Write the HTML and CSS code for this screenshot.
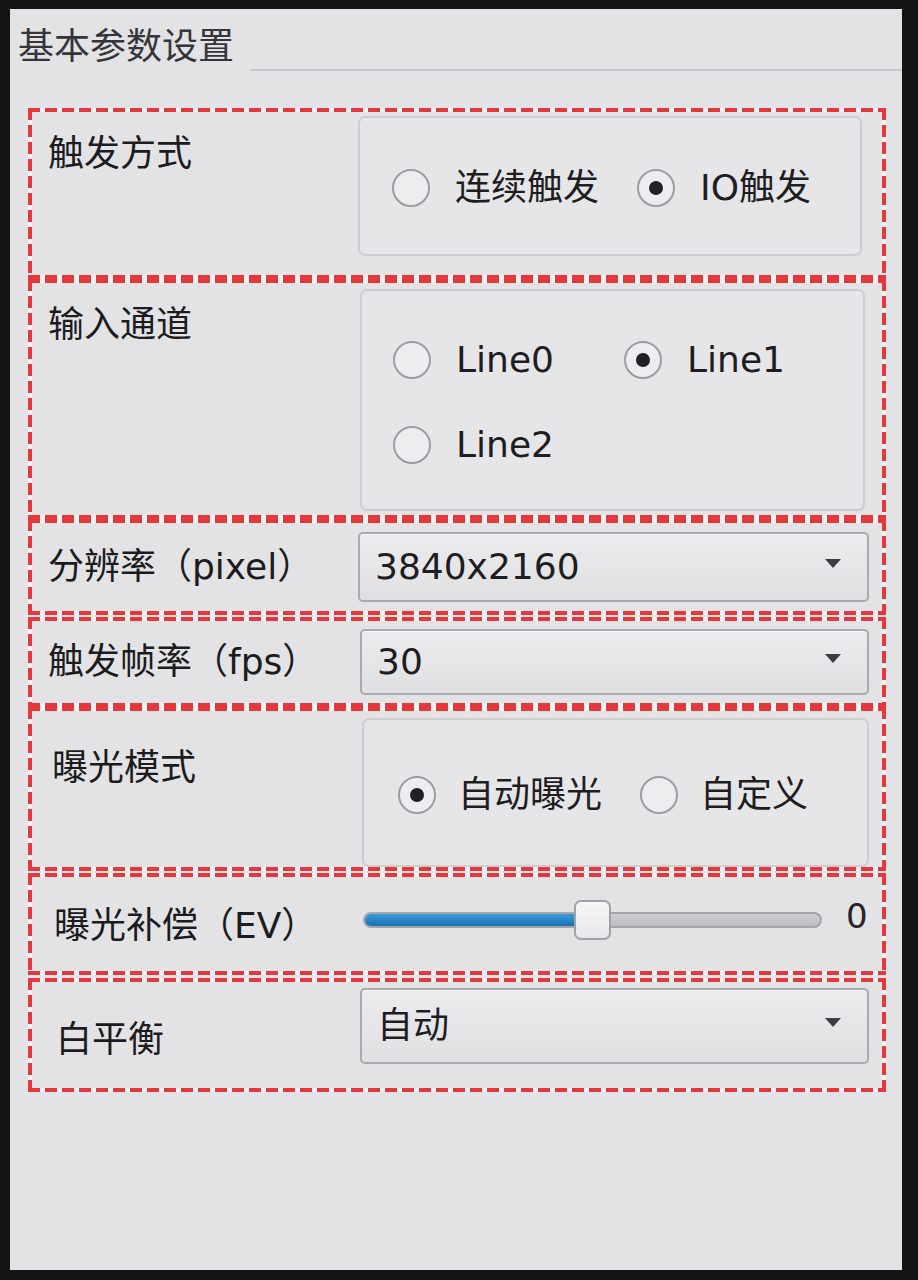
FILE: index.html
```html
<!DOCTYPE html>
<html lang="zh-CN">
<head>
<meta charset="utf-8">
<title>基本参数设置</title>
<link rel="stylesheet" href="styles.css">
</head>
<body>
<div class="screen">
  <div class="tabbar">
    <div class="tab">基本参数设置</div>
    <div class="tab-fill"></div>
  </div>
  <div class="form">
    <div class="field field-trigger">
      <div class="label label-top">触发方式</div>
      <div class="group group-trigger">
        <div class="option"><span class="radio"></span><span>连续触发</span></div>
        <div class="option"><span class="radio is-checked"></span><span>IO触发</span></div>
      </div>
    </div>

    <div class="field field-input">
      <div class="label label-top">输入通道</div>
      <div class="group group-input">
        <div class="option"><span class="radio"></span><span>Line0</span></div>
        <div class="option"><span class="radio is-checked"></span><span>Line1</span></div>
        <div class="option"><span class="radio"></span><span>Line2</span></div>
      </div>
    </div>

    <div class="field field-res">
      <div class="label">分辨率（pixel）</div>
      <div class="combo combo-res"><span class="combo-text">3840x2160</span><span class="arrow"></span></div>
    </div>

    <div class="field field-fps">
      <div class="label">触发帧率（fps）</div>
      <div class="combo combo-fps"><span class="combo-text">30</span><span class="arrow"></span></div>
    </div>

    <div class="field field-exp">
      <div class="label label-exp">曝光模式</div>
      <div class="group group-exp">
        <div class="option"><span class="radio is-checked"></span><span>自动曝光</span></div>
        <div class="option"><span class="radio"></span><span>自定义</span></div>
      </div>
    </div>

    <div class="field field-ev">
      <div class="label label-ev">曝光补偿（EV）</div>
      <div class="slider">
        <div class="track">
          <div class="fill" style="width: 47%"></div>
          <div class="handle" style="left: 46%"></div>
        </div>
        <div class="value">0</div>
      </div>
    </div>

    <div class="field field-wb">
      <div class="label label-wb">白平衡</div>
      <div class="combo combo-wb"><span class="combo-text">自动</span><span class="arrow"></span></div>
    </div>
  </div>
</div>
</body>
</html>
```

FILE: styles.css
```css
* { box-sizing: border-box; }

html, body {
  margin: 0;
  height: 100%;
}

body {
  background: #141414;
  padding: 9px 16px 0 10px;
  font-family: "DejaVu Sans", "Noto Sans CJK SC", sans-serif;
  font-size: 36px;
  line-height: 40px;
  color: #1d1d22;
}

.screen {
  width: 892px;
  height: 1261px;
  background: #e3e3e6;
  display: flex;
  flex-direction: column;
  overflow: hidden;
}

/* tab header */
.tabbar {
  display: flex;
  height: 62px;
  flex: none;
}

.tab {
  width: 240px;
  padding: 18px 0 0 8px;
  color: #35353a;
  white-space: nowrap;
}

.tab-fill {
  flex: 1;
  border-bottom: 2px solid #c6c6ca;
}

/* form rows with red dashed outlines */
.form {
  display: flex;
  flex-direction: column;
  margin: 37px 0 0 18px;
  width: 858px;
}

.field {
  --dash: #e4393c;
  --gap: rgba(255, 255, 255, 0.55);
  display: grid;
  grid-template-columns: 310px 1fr;
  padding: 4px 17px 4px 20px;
  background:
    repeating-linear-gradient(90deg, var(--dash) 0 12px, var(--gap) 12px 17px) left top / 100% 4px no-repeat,
    repeating-linear-gradient(90deg, var(--dash) 0 12px, var(--gap) 12px 17px) left bottom / 100% 4px no-repeat,
    repeating-linear-gradient(180deg, var(--dash) 0 12px, var(--gap) 12px 17px) left top / 4px 100% no-repeat,
    repeating-linear-gradient(180deg, var(--dash) 0 12px, var(--gap) 12px 17px) right top / 4px 100% no-repeat;
  align-items: center;
}

.field-trigger { height: 171px; align-items: start; }
.field-input   { height: 240px; align-items: start; }
.field-res     { height: 96px; }
.field-fps     { height: 90px; margin-top: 2px; }
.field-exp     { height: 164px; align-items: start; }
.field-ev      { height: 102px; margin-top: 2px; }
.field-wb      { height: 114px; margin-top: 3px; align-items: start; }

.label {
  white-space: nowrap;
  color: #1b1b20;
}

.label-top { padding-top: 22px; }
.label-exp { padding-top: 37px; padding-left: 4px; }
.label-ev  { padding-top: 4px; padding-left: 6px; }
.label-wb  { padding-top: 38px; padding-left: 8px; }

/* radio groups */
.group {
  border: 2px solid #cdcdd1;
  border-radius: 7px;
  background: #e6e6e9;
}

.group-trigger {
  margin-top: 4px;
  width: 504px;
  height: 140px;
  display: flex;
  align-items: center;
  gap: 38px;
  padding: 4px 0 0 32px;
}

.group-input {
  margin-top: 6px;
  width: 505px;
  height: 222px;
  display: grid;
  grid-template-columns: 231px 231px;
  grid-auto-rows: 40px;
  row-gap: 45px;
  padding: 49px 0 0 31px;
  margin-left: 2px;
}

.group-exp {
  margin-top: 7px;
  height: 149px;
  display: flex;
  align-items: center;
  gap: 38px;
  padding: 4px 0 0 34px;
  margin-left: 4px;
}

.option {
  display: flex;
  align-items: center;
  gap: 25px;
  white-space: nowrap;
}

.group-exp .option { gap: 22px; }

.radio {
  width: 38px;
  height: 38px;
  flex: none;
  border-radius: 50%;
  border: 2px solid #9d9da1;
  background: #ededf0;
  display: flex;
  align-items: center;
  justify-content: center;
}

.radio.is-checked::after {
  content: "";
  width: 14px;
  height: 14px;
  border-radius: 50%;
  background: #202026;
}

/* combo boxes */
.combo {
  display: flex;
  align-items: center;
  justify-content: space-between;
  border: 2px solid #a9a9ae;
  border-radius: 5px;
  background: linear-gradient(#ececef, #e0e0e3);
  padding: 0 26px 0 15px;
  box-shadow: inset 0 1px 0 #f6f6f8;
}

.combo-res { height: 70px; }
.combo-fps { height: 66px; margin-left: 2px; }
.combo-wb  { height: 76px; margin-top: 6px; margin-left: 2px; }

.combo-text { white-space: nowrap; }

.arrow {
  width: 0;
  height: 0;
  border-left: 8px solid transparent;
  border-right: 8px solid transparent;
  border-top: 9px solid #3c3c42;
  margin-bottom: 8px;
}

/* slider */
.slider {
  display: flex;
  align-items: flex-start;
  gap: 24px;
  padding-left: 5px;
  margin-bottom: 14px;
}

.track {
  position: relative;
  width: 459px;
  height: 16px;
  margin-top: 12px;
  border-radius: 8px;
  border: 2px solid #a6a6aa;
  background: linear-gradient(#cfcfd2, #bdbdc1);
}

.fill {
  height: 100%;
  border-radius: 7px 0 0 7px;
  background: linear-gradient(#3a9ad8, #1a72b4);
}

.handle {
  position: absolute;
  top: -14px;
  width: 37px;
  height: 40px;
  border-radius: 7px;
  border: 2px solid #a2a2a6;
  background: linear-gradient(#f6f6f7, #e8e8ea);
}

.value {
  font-size: 34px;
  line-height: 36px;
  color: #25252a;
  margin-top: -2px;
}
```
